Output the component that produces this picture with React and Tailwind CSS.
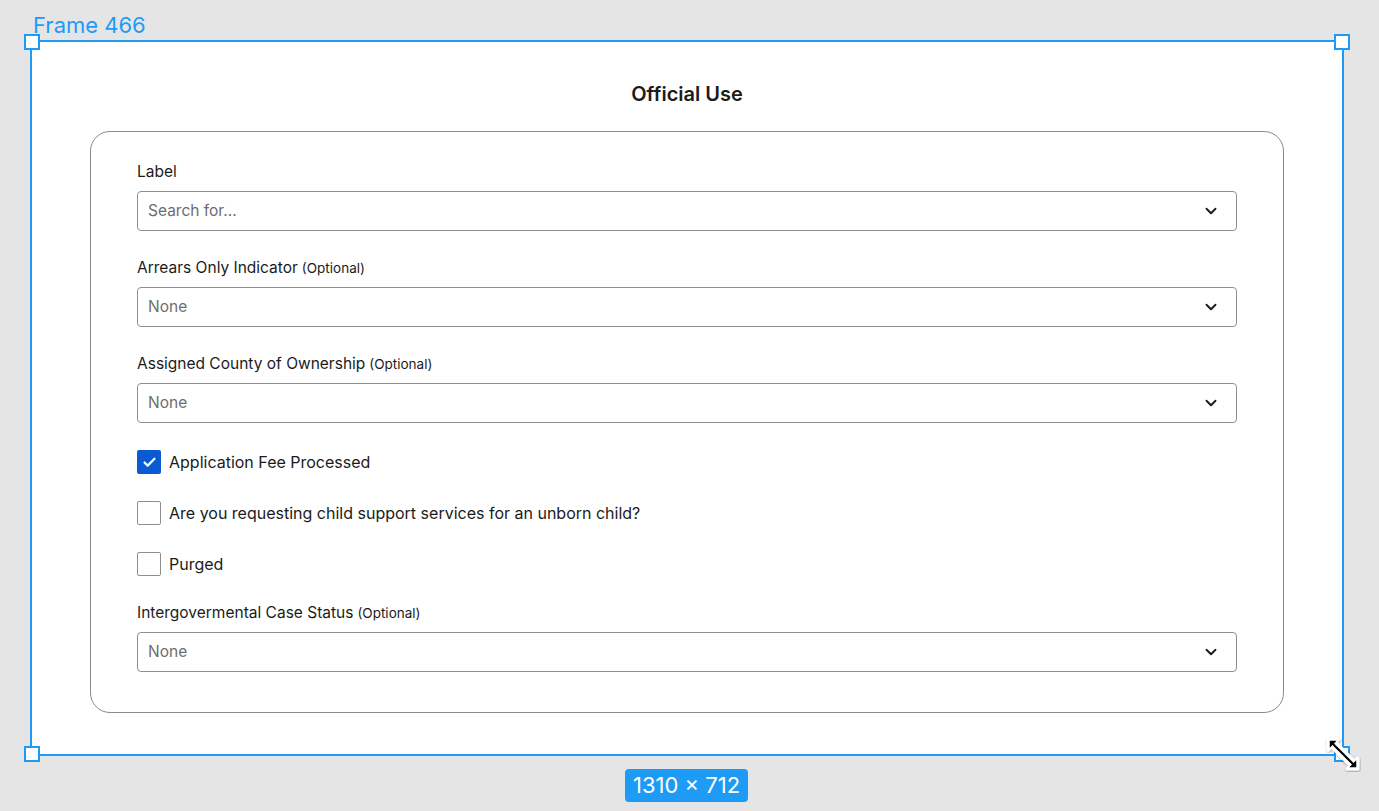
import { ChevronDown, Check } from "lucide-react";

const font = { fontFamily: "Inter, 'Open Sans', sans-serif" };

function SelectField({ label, optional, placeholder }) {
  return (
    <div className="flex flex-col">
      <div className="h-5 mb-[9px] flex items-center text-[15.5px] leading-5 text-[#1b1b1b]">
        {label}
        {optional && <span className="ml-1 text-[13.5px]">(Optional)</span>}
      </div>
      <div className="h-10 rounded-[4px] border border-[#8f8f8f] flex items-center justify-between pl-[10px] pr-4">
        <span className="text-[15.5px] text-[#6d6d6d]">{placeholder}</span>
        <ChevronDown size={18} strokeWidth={2.5} className="text-[#1b1b1b]" />
      </div>
    </div>
  );
}

function CheckRow({ label, checked }) {
  return (
    <div className="flex items-center gap-2 h-6">
      {checked ? (
        <div className="w-6 h-6 rounded-[2px] bg-[#0a5ad4] flex items-center justify-center">
          <Check size={15} strokeWidth={3.5} className="text-white" />
        </div>
      ) : (
        <div className="w-6 h-6 rounded-[2px] border border-[#8f8f8f] bg-white" />
      )}
      <span className="text-[16px] text-[#1b1b1b]">{label}</span>
    </div>
  );
}

export default function App() {
  return (
    <div className="w-[1379px] h-[811px] bg-[#e5e5e5] relative overflow-hidden" style={font}>
      <div className="absolute left-[33px] top-[11px] text-[22px] leading-7 text-[#1e9bf5]">Frame 466</div>

      <div className="pt-[42px] pl-[32px]">
        <div className="w-[1310px] h-[712px] bg-white relative outline-2 outline-[#1e9bf5]">
          <div className="pt-[38px] pb-[15px] text-center text-[20px] leading-7 font-semibold text-[#1b1b1b]">
            Official Use
          </div>
          <div className="mx-[58px] mt-[8px] border border-[#8a8a8a] rounded-[20px] pt-[30px] pb-[40px] px-[46px] flex flex-col gap-[27px]">
            <SelectField label="Label" placeholder="Search for..." />
            <SelectField label="Arrears Only Indicator" optional placeholder="None" />
            <SelectField label="Assigned County of Ownership" optional placeholder="None" />
            <CheckRow label="Application Fee Processed" checked />
            <CheckRow label="Are you requesting child support services for an unborn child?" />
            <CheckRow label="Purged" />
            <SelectField label="Intergovermental Case Status" optional placeholder="None" />
          </div>

          <div className="absolute -left-[8px] -top-[8px] w-4 h-4 bg-white border-2 border-[#1e9bf5]" />
          <div className="absolute -right-[8px] -top-[8px] w-4 h-4 bg-white border-2 border-[#1e9bf5]" />
          <div className="absolute -left-[8px] -bottom-[8px] w-4 h-4 bg-white border-2 border-[#1e9bf5]" />
          <div className="absolute -right-[8px] -bottom-[8px] w-4 h-4 bg-white border-2 border-[#1e9bf5]" />
        </div>
      </div>

      <div className="absolute left-[625px] top-[769px] w-[123px] h-[33px] rounded-[4px] bg-[#1e9bf5] text-white text-[22px] flex items-center justify-center">
        1310 × 712
      </div>

      <svg className="absolute left-[1325px] top-[736px]" width="36" height="36" viewBox="0 0 34 34">
        <defs>
          <filter id="sh" x="-20%" y="-20%" width="140%" height="140%">
            <feDropShadow dx="0.5" dy="1" stdDeviation="0.8" floodOpacity="0.4" />
          </filter>
        </defs>
        <g filter="url(#sh)">
          <path d="M3 3 L13 3 L10 6 L28 24 L31 21 L31 31 L21 31 L24 28 L6 10 L3 13 Z" fill="white" stroke="white" strokeWidth="3" strokeLinejoin="round" />
          <path d="M4.5 4.5 L11 4.5 L8.5 7 L27 25.5 L29.5 23 L29.5 29.5 L23 29.5 L25.5 27 L7 8.5 L4.5 11 Z" fill="black" />
        </g>
      </svg>
    </div>
  );
}
